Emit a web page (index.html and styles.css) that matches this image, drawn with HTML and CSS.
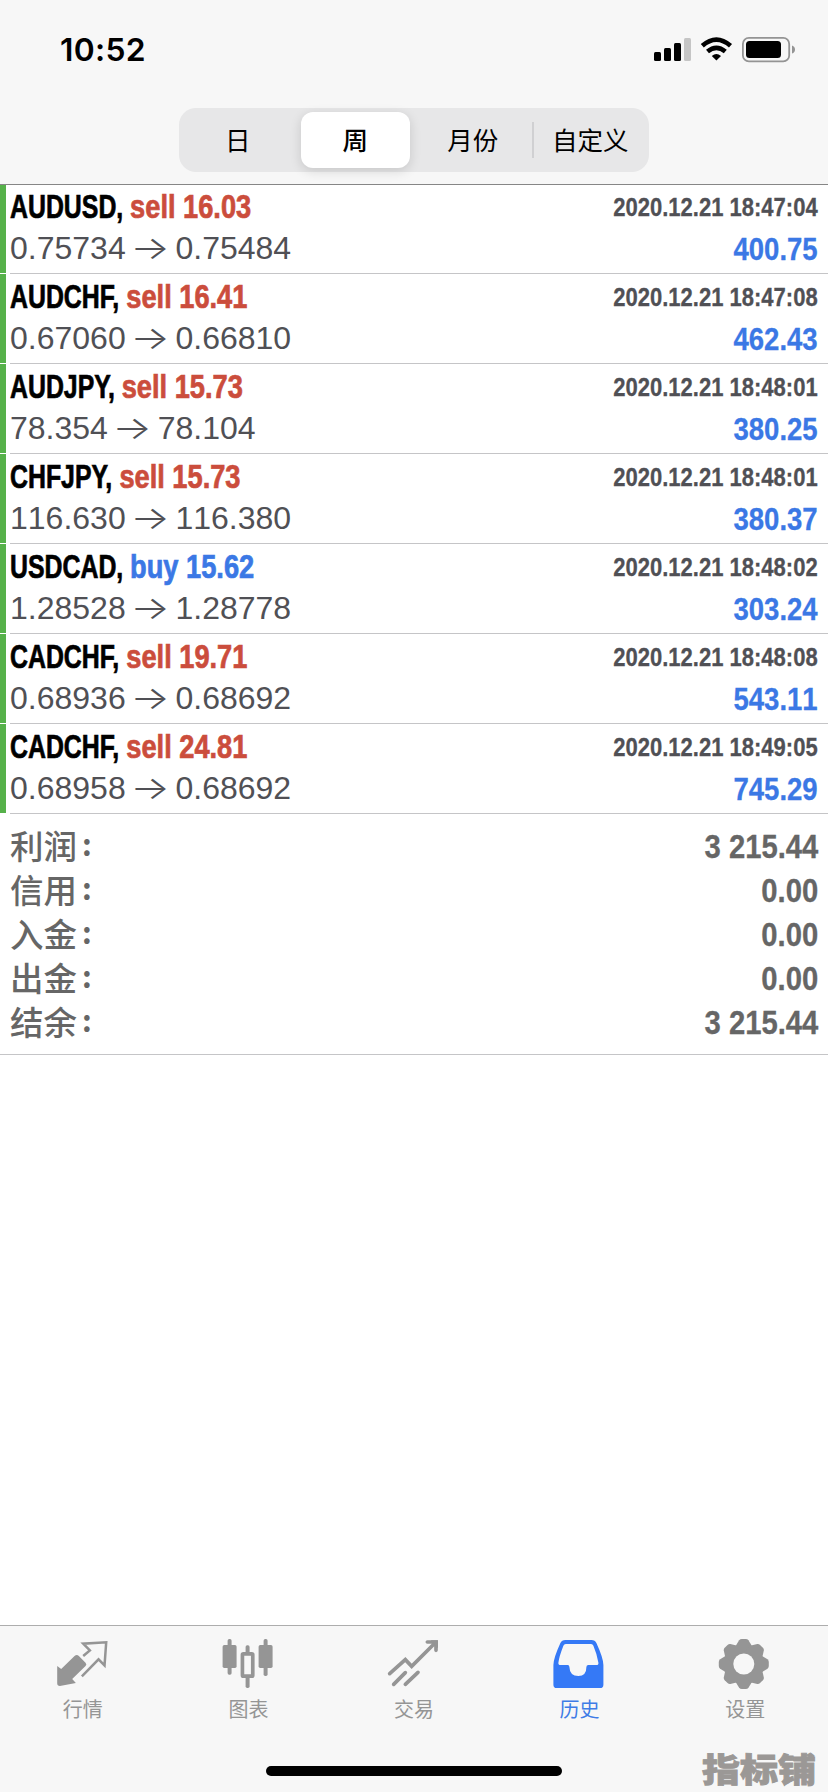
FILE: index.html
```html
<!DOCTYPE html>
<html lang="zh-CN">
<head>
<meta charset="utf-8">
<title>历史</title>
<link rel="stylesheet" href="styles.css">
</head>
<body>
<div class="screen">
  <header class="header">
    <div class="status">
      <span class="clock">10:52</span>
      <svg class="status-icons" width="144" height="30" viewBox="0 0 144 30">
        <g fill="#000">
          <rect x="3" y="17" width="7" height="9" rx="1.5"/><rect x="13" y="13" width="7" height="13" rx="1.5"/><rect x="23" y="8" width="7" height="18" rx="1.5"/>
          <rect x="33" y="3" width="7" height="23" rx="1.5" fill="#c5c5c5"/>
          <path d="M65.400 25.500l-4.600-4.600q4.600-3.800 9.200 0z"/>
        </g>
        <g fill="none" stroke="#000" stroke-width="4.600">
          <path d="M51.300 10.800q14.100-12.400 28.200 0"/><path d="M56.500 16.600q8.900-7.400 17.800 0"/>
        </g>
        <rect x="91.900" y="2.900" width="46.300" height="23.500" rx="6" fill="#f7f7f7" stroke="#949494" stroke-width="1.800"/>
        <rect x="95" y="6" width="35" height="17" rx="3.500"/>
        <path d="M141 10.500q3 1 3 4t-3 4z" fill="#949494"/>
      </svg>
    </div>
    <nav class="segments">
      <span class="segment">日</span>
      <span class="segment segment-on">周</span>
      <span class="segment">月份</span>
      <span class="segment segment-divided">自定义</span>
    </nav>
  </header>
  <main class="content">
    <section class="deals">
      <div class="deal"><div class="left"><div class="name">AUDUSD, <span class="side sell">sell 16.03</span></div><div class="price">0.75734 <i class="arrow">→</i> 0.75484</div></div><div class="right"><div class="date">2020.12.21 18:47:04</div><div class="profit">400.75</div></div></div>
      <div class="deal"><div class="left"><div class="name">AUDCHF, <span class="side sell">sell 16.41</span></div><div class="price">0.67060 <i class="arrow">→</i> 0.66810</div></div><div class="right"><div class="date">2020.12.21 18:47:08</div><div class="profit">462.43</div></div></div>
      <div class="deal"><div class="left"><div class="name">AUDJPY, <span class="side sell">sell 15.73</span></div><div class="price">78.354 <i class="arrow">→</i> 78.104</div></div><div class="right"><div class="date">2020.12.21 18:48:01</div><div class="profit">380.25</div></div></div>
      <div class="deal"><div class="left"><div class="name">CHFJPY, <span class="side sell">sell 15.73</span></div><div class="price">116.630 <i class="arrow">→</i> 116.380</div></div><div class="right"><div class="date">2020.12.21 18:48:01</div><div class="profit">380.37</div></div></div>
      <div class="deal"><div class="left"><div class="name">USDCAD, <span class="side buy">buy 15.62</span></div><div class="price">1.28528 <i class="arrow">→</i> 1.28778</div></div><div class="right"><div class="date">2020.12.21 18:48:02</div><div class="profit">303.24</div></div></div>
      <div class="deal"><div class="left"><div class="name">CADCHF, <span class="side sell">sell 19.71</span></div><div class="price">0.68936 <i class="arrow">→</i> 0.68692</div></div><div class="right"><div class="date">2020.12.21 18:48:08</div><div class="profit">543.11</div></div></div>
      <div class="deal"><div class="left"><div class="name">CADCHF, <span class="side sell">sell 24.81</span></div><div class="price">0.68958 <i class="arrow">→</i> 0.68692</div></div><div class="right"><div class="date">2020.12.21 18:49:05</div><div class="profit">745.29</div></div></div>
    </section>
    <section class="summary">
      <div class="total"><span class="label">利润<b class="colon">:</b></span><span class="amount">3 215.44</span></div>
      <div class="total"><span class="label">信用<b class="colon">:</b></span><span class="amount">0.00</span></div>
      <div class="total"><span class="label">入金<b class="colon">:</b></span><span class="amount">0.00</span></div>
      <div class="total"><span class="label">出金<b class="colon">:</b></span><span class="amount">0.00</span></div>
      <div class="total"><span class="label">结余<b class="colon">:</b></span><span class="amount">3 215.44</span></div>
    </section>
  </main>
  <footer class="tabbar">
    <nav class="tabs">
      <div class="tab">
        <svg class="icon" viewBox="170.400 84 156 156"><path fill="#959595" d="M171 168l12 9 40-39q7-6 13 0l20 20q5 5 0 10l-40 39 11 12-48 9q-8 0-8-8z"/><path fill="none" stroke="#959595" stroke-width="7.500" d="M249 138l20-17-20-20 69-4-5 69-18-18-50 51"/></svg>
        <span>行情</span>
      </div>
      <div class="tab">
        <svg class="icon" viewBox="667.200 84 156 156"><g fill="#959595"><rect x="684" y="87" width="12" height="107" rx="5"/><rect x="669" y="105" width="42" height="69" rx="5"/><rect x="792" y="87" width="12" height="111" rx="5"/><rect x="777" y="105" width="42" height="69" rx="5"/><rect x="738" y="106" width="12" height="30" rx="5"/><rect x="738" y="196" width="12" height="38" rx="5"/></g><rect x="728.500" y="131.500" width="31" height="67" rx="3" fill="#f7f7f7" stroke="#959595" stroke-width="11"/></svg>
        <span>图表</span>
      </div>
      <div class="tab">
        <svg class="icon" viewBox="264 84 156 156"><g fill="none" stroke="#959595" stroke-width="11" stroke-linecap="round"><path d="M269 191l47-42 19 20 70-70M281 223l35-35M316 223l38-36M382 96h26v25"/></g><path fill="#959595" d="M392 91h22v24z"/></svg>
        <span>交易</span>
      </div>
      <div class="tab tab-on">
        <svg class="icon" viewBox="-19.200 84 156 156"><path fill="#3579f6" fill-rule="evenodd" d="M15 90H93Q104 90 108 99Q129 145 129 165V224Q129 234 119 234H-11Q-21 234-21 224V165Q-21 145 0 99Q4 90 15 90ZM16 102Q11 102 9 107Q-4 140-6 158Q-7 165 1 165H22Q27 165 27 171Q28 198 54 198Q78 198 78 171Q78 165 84 165H108Q115 165 114 158Q109 130 99 107Q97 102 92 102Z"/></svg>
        <span>历史</span>
      </div>
      <div class="tab">
        <svg class="icon" viewBox="477.600 84 156 156"><g fill="#959595"><circle cx="552" cy="162" r="57"/><g id="teeth"><path d="M528 107L538 91Q541 87 546 87H558Q563 87 566 91L576 107V217L566 233Q563 237 558 237H546Q541 237 538 233L528 217Z"/><path d="M528 107L538 91Q541 87 546 87H558Q563 87 566 91L576 107V217L566 233Q563 237 558 237H546Q541 237 538 233L528 217Z" transform="rotate(45 552 162)"/></g><use href="#teeth" transform="rotate(90 552 162)"/></g><circle cx="552" cy="162" r="31.500" fill="#f7f7f7"/></svg>
        <span>设置</span>
      </div>
    </nav>
    <div class="home"></div>
    <div class="watermark">指标铺</div>
  </footer>
</div>
</body>
</html>
```
FILE: styles.css
```css
* { box-sizing: border-box; }

body {
  margin: 0;
  background: #fff;
  font-family: "Liberation Sans", "Noto Sans CJK SC", sans-serif;
}

.screen {
  display: flex;
  flex-direction: column;
  width: 828px;
  height: 1792px;
  overflow: hidden;
}

.header {
  height: 185px;
  background: #f7f7f7;
  border-bottom: 1px solid #868686;
}

.status {
  display: flex;
  justify-content: space-between;
  height: 108px;
  padding: 30px 33px 0 60px;
}

.clock {
  font: 600 31.800px/39px Inter, sans-serif;
  letter-spacing: 0.300px;
}

.status-icons { margin-top: 5px; }

.segments {
  display: grid;
  grid-template-columns: repeat(4, 1fr);
  width: 470px;
  height: 64px;
  margin-left: 179px;
  border-radius: 17px;
  background: #e7e7e8;
}

.segment {
  position: relative;
  font: 400 25.500px/62px "Noto Sans CJK SC", sans-serif;
  text-align: center;
}

.segment-on {
  margin: 4px 4.500px;
  border-radius: 12px;
  background: #fff;
  box-shadow: 0 3px 12px rgba(0, 0, 0, 0.140);
  line-height: 54px;
  font-weight: 500;
}

.segment-divided::before {
  content: "";
  position: absolute;
  left: 0;
  top: 14px;
  width: 2px;
  height: 36px;
  background: #d0d0d2;
}

.content { flex: 1; }

.deal {
  display: flex;
  justify-content: space-between;
  height: 90px;
  padding: 3px 10px 0;
  background:
    linear-gradient(#c5c5c7, #c5c5c7) 10px 100% / 100% 1px no-repeat,
    linear-gradient(#56b14a, #56b14a) 0 0 / 6px calc(100% - 1px) no-repeat;
}

.deal:first-child { height: 89px; padding-top: 2px; }

/* Condensed bold face */
.name, .date, .profit, .amount {
  font-weight: 700;
  font-kerning: none;
  white-space: nowrap;
  transform: scaleX(0.860);
  transform-origin: 100% 50%;
  -webkit-text-stroke: 0.300px currentColor;
}

.name {
  font-size: 32.500px;
  line-height: 41px;
  height: 40px;
  font-kerning: normal;
  transform: scaleX(0.765);
  transform-origin: 0 50%;
  -webkit-text-stroke: 0.700px currentColor;
}

.side {
  display: inline-block;
  transform: scaleX(1.095);
  transform-origin: 0 50%;
}

.sell { color: #cb4d3c; }
.buy, .profit { color: #3b78e5; }
.price { font-size: 32px; line-height: 43px; color: #505055; white-space: nowrap; font-kerning: none; }

.arrow {
  display: inline-block;
  width: 32px;
  font: 300 32px/30px Inter, sans-serif;
  text-align: center;
  transform: translateX(-1px) scaleX(1.300);
}

.right { text-align: right; }
.date { font-size: 25.600px; line-height: 40px; color: #505055; }
.profit { font-size: 32px; line-height: 45px; }

.summary {
  height: 241px;
  padding: 9px 10px 0;
  border-bottom: 1px solid #c5c5c7;
  color: #666;
}

.total {
  display: flex;
  justify-content: space-between;
  height: 44px;
  line-height: 44px;
}

.label { font: 500 33.500px/43px "Noto Sans CJK SC", sans-serif; }
.colon { margin-left: 5px; font-weight: 700; font-size: 30px; line-height: 30px; vertical-align: 3px; }
.amount { font-size: 34px; line-height: 47px; }

.tabbar {
  position: relative;
  height: 167px;
  border-top: 1px solid #adadad;
  background: #f7f7f7;
}

.tabs { display: flex; height: 140px; padding-top: 12px; }

.tab {
  display: flex;
  flex: 1;
  flex-direction: column;
  align-items: center;
  color: #959595;
  font: 400 20px/30px "Noto Sans CJK SC", sans-serif;
}

.tab-on { color: #3f7ce6; }
.icon { width: 52px; height: 52px; margin-bottom: 4px; overflow: visible; }
.home { width: 296px; height: 10px; margin-left: 266px; border-radius: 5px; background: #000; }

.watermark {
  position: absolute;
  right: 12px;
  bottom: 4px;
  font: 900 38px/40px "Noto Sans CJK SC", sans-serif;
  color: #9b9896;
  transform: scaleY(0.870);
  -webkit-text-stroke: 1px #9b9896;
}
```
